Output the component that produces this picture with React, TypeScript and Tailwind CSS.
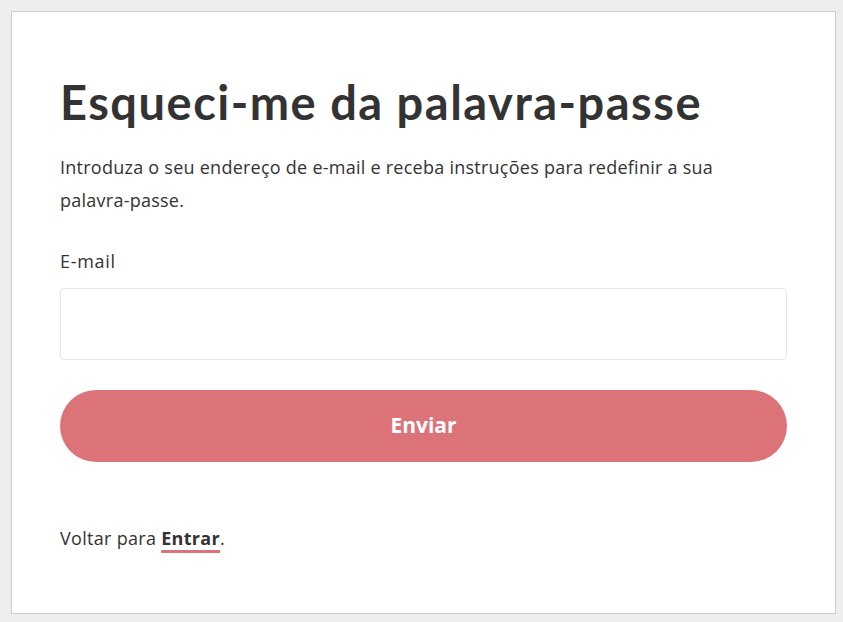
export default function App() {
  return (
    <div className="min-h-screen bg-[#eeeeee] pl-[11px] pt-[11px]" style={{ fontFamily: "'Open Sans', Lato, sans-serif" }}>
      <div className="h-[603px] w-[825px] border border-[#cccccc] bg-white px-12 pt-[62px] text-[#333333]">
        <h1
          className="text-[47px] font-bold leading-[56px] tracking-[1.5px]"
          style={{ fontFamily: "Lato, 'Open Sans', sans-serif" }}
        >
          Esqueci-me da palavra-passe
        </h1>
        <p className="mt-[21px] text-[18px] leading-[33px] tracking-[0.25px]">
          Introduza o seu endereço de e-mail e receba instruções para redefinir a sua palavra-passe.
        </p>

        <label className="mt-[32px] block text-[18px] leading-[24px] tracking-[0.7px]">E-mail</label>
        <input
          type="email"
          className="mt-[15px] block h-[72px] w-full rounded border border-[#e6e6e6] px-4 text-[17px] outline-none"
        />

        <button className="mt-[30px] block h-[72px] w-full rounded-full bg-[#dc7378] text-[21px] font-bold text-white">
          Enviar
        </button>

        <p className="mt-[64px] text-[18px] leading-[24px] tracking-[0.3px]">
          Voltar para{" "}
          <a
            href="#"
            className="font-bold text-[#333333] underline decoration-[#dc7378] decoration-[3px] underline-offset-[5px]"
          >
            Entrar
          </a>
          .
        </p>
      </div>
    </div>
  );
}
